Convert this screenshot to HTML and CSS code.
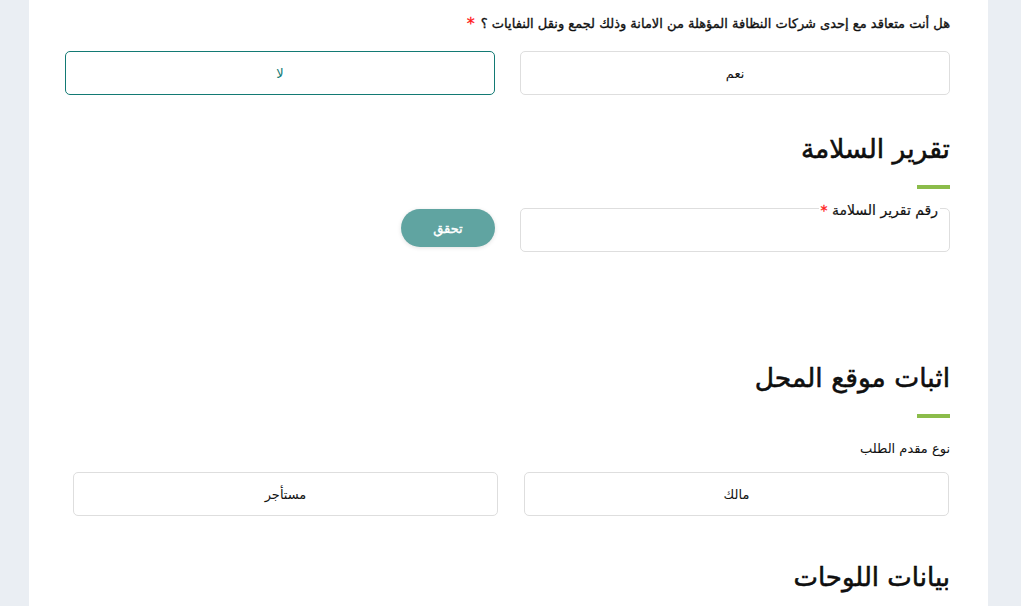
FILE: index.html
```html
<!DOCTYPE html>
<html lang="ar" dir="rtl">
<head>
<meta charset="utf-8">
<link rel="stylesheet" href="styles.css">
</head>
<body>
<div class="panel">
  <div class="question">
    <span class="q-text">هل أنت متعاقد مع إحدى شركات النظافة المؤهلة من الامانة وذلك لجمع ونقل النفايات ؟</span>
    <span class="star">*</span>
  </div>
  <div class="choices first">
    <div class="choice">نعم</div>
    <div class="choice selected">لا</div>
  </div>

  <h2 class="section-title t1">تقرير السلامة</h2>
  <div class="bar"></div>

  <div class="safety-row">
    <div class="field">
      <span class="float-label">رقم تقرير السلامة <span class="star">*</span></span>
    </div>
    <div class="btn-wrap"><button class="verify">تحقق</button></div>
  </div>

  <h2 class="section-title t2">اثبات موقع المحل</h2>
  <div class="bar"></div>
  <div class="label">نوع مقدم الطلب</div>
  <div class="choices second">
    <div class="choice">مالك</div>
    <div class="choice">مستأجر</div>
  </div>

  <h2 class="section-title t3">بيانات اللوحات</h2>
</div>
</body>
</html>
```

FILE: styles.css
```css
html, body {
  margin: 0;
  padding: 0;
  background: #eaeef3;
  height: 100%;
  overflow: hidden;
}
body {
  font-family: "DejaVu Sans", "Noto Sans", sans-serif;
  color: #111;
}
.panel {
  margin: 0 33px 0 29px;
  min-height: 606px;
  background: #fff;
  box-sizing: border-box;
  padding: 12px 38px 0 36px;
}
.question {
  font-size: 13px;
  font-weight: normal;
  -webkit-text-stroke: 0.35px #111;
  height: 24px;
  line-height: 24px;
  display: flex;
  gap: 6px;
}
.star {
  color: #ff1a1a;
  -webkit-text-stroke: 0.3px #ff1a1a;
  font-size: 16px;
}
.choices {
  display: grid;
  grid-template-columns: 1fr 1fr;
  column-gap: 25px;
}
.choices.first { margin-top: 15px; }
.choice {
  height: 44px;
  border: 1px solid #dedede;
  border-radius: 5px;
  box-sizing: border-box;
  display: flex;
  align-items: center;
  justify-content: center;
  font-size: 13px;
}
.choice.selected {
  border: 1.5px solid #137a74;
  color: #137a74;
}
.section-title {
  margin: 0;
  font-size: 26.5px;
  font-weight: normal;
  line-height: 34px;
  -webkit-text-stroke: 0.5px #000;
}
.t1 { margin-top: 37px; }
.bar {
  width: 33px;
  height: 4px;
  background: #8bbc4a;
  margin-top: 19px;
}
.safety-row {
  display: flex;
  gap: 25px;
  margin-top: 19px;
  align-items: flex-start;
}
.field {
  width: 430px;
  height: 44px;
  border: 1px solid #dedede;
  border-radius: 5px;
  box-sizing: border-box;
  position: relative;
}
.float-label {
  position: absolute;
  top: -7px;
  right: 9px;
  background: #fff;
  padding: 0 2px;
  font-size: 14px;
  line-height: 16px;
  -webkit-text-stroke: 0.2px #111;
}
.float-label .star { font-size: 14px; }
.btn-wrap { padding-top: 1px; }
.verify {
  width: 94px;
  height: 38px;
  border: none;
  border-radius: 19px;
  background: #60a4a1;
  color: #fff;
  font-family: "DejaVu Sans", sans-serif;
  font-size: 13px;
  font-weight: normal;
  -webkit-text-stroke: 0.4px #fff;
  box-shadow: 0 1px 4px rgba(0,0,0,0.12);
}
.t2 { margin-top: 109px; }
.label {
  font-size: 13px;
  margin-top: 22px;
  line-height: 18px;
}
.choices.second {
  margin-top: 14px;
  padding: 0 1px 0 8px;
  column-gap: 26px;
}
.t3 { margin-top: 44px; font-size: 26px; }
```
